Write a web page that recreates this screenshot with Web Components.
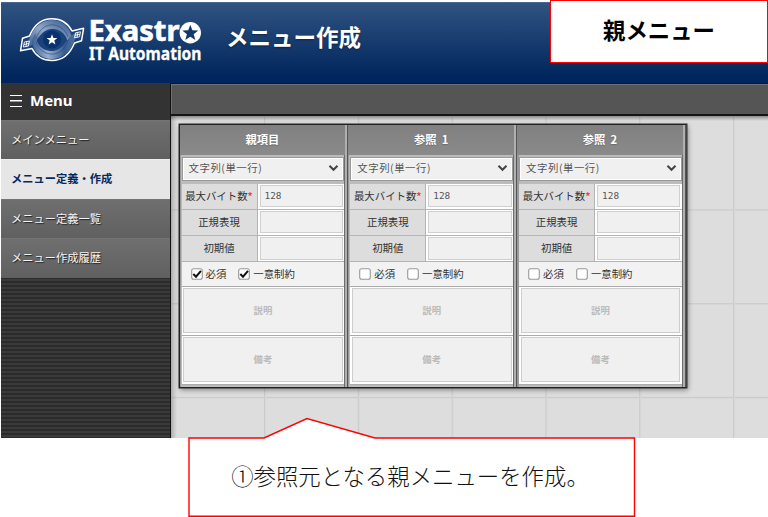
<!DOCTYPE html>
<html lang="ja">
<head>
<meta charset="utf-8">
<title>メニュー作成</title>
<style>
html,body{margin:0;height:100%;background:#fff;overflow:hidden}
body{font-family:"Noto Sans","Noto Sans CJK JP",sans-serif}
</style>
</head>
<body>
<ex-page></ex-page>
<script>
const define = (name, html) => customElements.define(name, class extends HTMLElement {
  constructor() {
    super();
    this.attachShadow({ mode: 'open' }).innerHTML = html;
  }
});

define('ex-logo', `
<style>:host{display:block;width:184px;height:50px}svg{display:block;overflow:visible}</style>
<svg width="184" height="50" viewBox="18 15 184 50">
  <defs>
    <linearGradient id="a" x1="0" y1="1" x2="1" y2="0"><stop offset="0" stop-color="#2c5188"/><stop offset=".5" stop-color="#93a8c7"/><stop offset="1" stop-color="#2a5087"/></linearGradient>
    <linearGradient id="b" x1="0" y1="0" x2="1" y2="0"><stop offset="0" stop-color="#3d6194"/><stop offset=".35" stop-color="#9bafcb"/><stop offset=".7" stop-color="#375c92"/><stop offset="1" stop-color="#54749f"/></linearGradient>
  </defs>
  <path d="M20.500 50.800 22.500 38.300 29.500 36C34 25 42 18.700 52 18.700c9.500 0 16 4.300 20 12.300L83.600 28.300 81.500 40.800 74.500 43C70 54 62 60.500 52 60.500c-9.500 0-16-4.300-20-12z" fill="#1b427a" stroke="#fff" stroke-width="1.500" stroke-linejoin="round"/>
  <path d="M30 37C34 27 42 20 52 20c11 0 18 7 20 18 .5 5-1 8-4 11 1-10-4-19-14-20-12-1-15 10-22 16l-6 3z" fill="url(#a)"/>
  <path d="M74 42C70 52 62 59 52 59c-11 0-18-7-20-16 0-4 1-7 4-10-1 10 5 17 14 18 12 1 15-10 22-16l6-3z" fill="url(#b)"/>
  <path d="M36 39c3-10 10-15 18-14 7 1 12 6 14 12M68 40c-3 10-10 15-18 14-7-1-12-6-14-12" fill="none" stroke="#1b427a" stroke-width="1" opacity=".55"/>
  <circle cx="52" cy="39.500" r="9" fill="#0a326b"/>
  <path d="m52 34.300 1.400 3.700 4 .1-3.100 2.500 1.100 3.800-3.400-2.200-3.400 2.200 1.100-3.800-3.100-2.500 4-.1z" fill="#fff"/>
  <path d="M24.400 42l5-1-1 5-5 1zM26.900 41.500l-1 5M23.900 44.500l5-1M75.500 32.800l5-1-1 5-5 1zM78 32.300l-1 5M75 35.300l5-1" fill="none" stroke="#fff" stroke-width=".9"/>
  <text x="88.500" y="41" textLength="91" lengthAdjust="spacingAndGlyphs" font-family="Noto Sans,sans-serif" font-weight="700" font-size="28.500" fill="#fff" stroke="#fff" stroke-width=".6">Exastr</text>
  <circle cx="190.300" cy="32.700" r="10.700" fill="#fff"/>
  <path d="m190.300 24.800 2.100 5.500 5.900.3-4.600 3.700 1.600 5.700-5-3.300-5 3.300 1.600-5.700-4.600-3.700 5.900-.3z" fill="#12386e"/>
  <text x="89" y="59.500" textLength="112.500" lengthAdjust="spacingAndGlyphs" font-family="Noto Sans,sans-serif" font-weight="700" font-size="17.500" fill="#fff" stroke="#fff" stroke-width=".3">IT Automation</text>
</svg>`);

define('ex-header', `
<style>
:host{display:flex;box-sizing:border-box;height:81px;padding:12px 0 0 17px;background:linear-gradient(#305381,#00265d 92%);color:#fff;border-top:1px solid #46658f}
h1{margin:3px 0 0 24px;font:700 22.500px/36px "Noto Sans CJK JP",sans-serif;text-shadow:0 1px 2px #0006}
</style><ex-logo></ex-logo><h1><slot></slot></h1>`);

define('ex-menu-item', `
<style>
:host{display:flex;align-items:center;box-sizing:border-box;height:39.400px;padding:0 0 1px 10px;font:400 11.250px/1 "Noto Sans CJK JP",sans-serif;color:#f4f4f4;background:linear-gradient(#6f6f6f,#606060);border-top:1px solid #747474;text-shadow:1px 1px 1px #222}
:host([active]){background:#e6e6e6;border-color:#eee;color:#06295e;font-weight:700;text-shadow:none}
</style><slot></slot>`);

define('ex-sidebar', `
<style>
:host{display:block;background:repeating-linear-gradient(#3a3a3a 0 2px,#2b2b2b 2px 4px)}
header{display:flex;align-items:center;gap:8px;height:34px;padding:0 0 3px 9px;background:#333;color:#fff;font:700 15px/1 "Noto Sans",sans-serif}
i{box-sizing:border-box;width:12px;height:12px;border:solid #fff;border-width:1.500px 0;background:linear-gradient(#fff,#fff) 0 50%/100% 1.500px no-repeat;margin-top:2px}
</style><header><i></i>Menu</header><slot></slot>`);

define('ex-field', `
<style>
:host{display:grid;grid-template-columns:76px 1fr;height:25.200px;border-bottom:1px solid #b4b4b4;font:400 10.400px/1 "Noto Sans CJK JP",sans-serif;color:#333;background:#fff}
.l{display:flex;align-items:center;justify-content:center;background:#ddd;border-right:1px solid #b4b4b4;white-space:nowrap}
.v{display:flex;align-items:center;margin:1.500px 1.500px 1.500px 2px;padding-left:4px;background:#f0f0f0;border:1.500px solid #cfcfcf;font:400 9.400px/1 "DejaVu Sans Mono",monospace;color:#555}
</style><div class="l"><slot></slot><slot name="mark"></slot></div><div class="v"><slot name="value"></slot></div>`);

define('ex-check', `
<style>
:host{display:flex;align-items:center;gap:3px;white-space:nowrap}
svg{display:block}path{display:none}:host([checked]) path{display:block}
</style><svg width="12" height="12"><rect x=".7" y=".7" width="10.600" height="10.600" rx="2" fill="#fff" stroke="#999" stroke-width="1.100"/><path d="M2.300 6 5 8.700 10 2.900" fill="none" stroke="#111" stroke-width="2"/></svg><slot></slot>`);

define('ex-column', `
<style>
:host{display:block;box-sizing:border-box;width:168.800px;height:262px;padding:0 4px 0 2px;background:linear-gradient(90deg,#999 0 1.500px,#bbb 1.500px 2px,#bbb 2px calc(100% - 4px),#6c6c6c calc(100% - 4px) calc(100% - 3px),#b0b0b0 calc(100% - 3px) calc(100% - 1px),#555 calc(100% - 1px));font:400 10.400px/1 "Noto Sans CJK JP",sans-serif;color:#333}
header{display:flex;align-items:center;justify-content:center;height:30px;margin:0 -1px 0 -2px;background:linear-gradient(#808080,#8a8a8a);color:#fff;font-weight:700;font-size:11.250px;white-space:pre;text-shadow:0 1px 1px #5558}
.sel{display:flex;align-items:center;justify-content:space-between;box-sizing:border-box;height:23.500px;margin:2px 0 3px;padding:0 4px 1px 6px;background:#f0f0f0;border:1px solid #999;box-shadow:inset 0 0 0 1px #fff;color:#555;letter-spacing:.55px}
.checks{display:flex;align-items:center;gap:12px;height:23.500px;padding-left:9px;background:#f2f2f2;border-bottom:1px solid #aaa}
.memo{height:49px;box-sizing:border-box;padding:1.500px;background:#fff;border-bottom:1px solid #aaa}
.memo div{display:flex;align-items:center;justify-content:center;height:100%;box-sizing:border-box;background:#f0f0f0;border:1.500px solid #cdcdcd;color:#bbb;font-weight:700;font-size:9.400px}
[slot=mark]{color:#e44;font-weight:700}
</style>
<header><slot></slot></header>
<div class="sel">文字列(単一行)<svg width="11" height="8"><path d="M1.500 1.700 5.500 5.800 9.500 1.700" fill="none" stroke="#444" stroke-width="2"/></svg></div>
<ex-field>最大バイト数<span slot="mark">*</span><span slot="value">128</span></ex-field>
<ex-field>正規表現</ex-field>
<ex-field>初期値</ex-field>
<div class="checks"><ex-check>必須</ex-check><ex-check>一意制約</ex-check></div>
<div class="memo"><div>説明</div></div><div class="memo"><div>備考</div></div>`);

define('ex-workspace', `
<style>
:host{display:grid;grid-template-rows:33px 1fr;min-width:0;border-left:1.500px solid #111}
.bar{box-sizing:border-box;background:#555;border:solid #151515;border-width:1px 0 2px;box-shadow:inset 1px 1px #707070}
.canvas{box-sizing:border-box;padding:8px 0 0 7.500px;background-color:#ddd;background-image:linear-gradient(#0005,#0000 5px),linear-gradient(90deg,#0003,#0000 6px),linear-gradient(90deg,#cbcbcb 1px,#d8d8d8 1px 2px,#0000 2px),linear-gradient(#cbcbcb 1px,#d8d8d8 1px 2px,#0000 2px);background-size:100% 5px,6px 100%,93.800px 100%,100% 93.800px;background-position:0 0,0 0,93px 0,0 -0.500px;background-repeat:no-repeat,no-repeat,repeat-x,repeat-y}
.table{display:flex;width:506.500px;height:262px;border:1px solid #222;border-right-color:#444;box-shadow:0 0 0 .5px #333,1px 2px 5px #0006}
</style><div class="bar"></div><div class="canvas"><div class="table"><slot></slot></div></div>`);

define('ex-callout', `
<style>
:host{position:absolute;display:flex;align-items:center;justify-content:center;box-sizing:border-box;color:#111;font:400 22.400px/1 "Noto Sans CJK JP",sans-serif;white-space:nowrap}
:host([kind=label]){left:550px;top:0;width:218px;height:62.500px;padding-bottom:5px;background:#fff;border:1.500px solid #f00;font-weight:700;color:#000}
:host([kind=note]){left:188px;top:417px;width:448px;height:100px;padding:16px 4px 0 0;font-weight:300}
svg{position:absolute;left:0;top:0;display:none}:host([kind=note]) svg{display:block}
span{position:relative}
</style><svg width="448" height="100"><path d="M1 21H76L119 1.500 187 21H446.500V99.300H1z" fill="#fff" stroke="#f00" stroke-width="1.400"/></svg><span><slot></slot></span>`);

define('ex-page', `
<style>
:host{display:block;position:relative;width:768px;height:517px;overflow:hidden;background:#fff}
.app{display:grid;grid-template-rows:81px 1fr;box-sizing:border-box;width:766.500px;height:436px;margin:2px 0 0 1px}
.body{display:grid;grid-template-columns:169px 1fr;min-height:0}
</style>
<div class="app"><ex-header>メニュー作成</ex-header>
<div class="body">
<ex-sidebar><ex-menu-item>メインメニュー</ex-menu-item><ex-menu-item active>メニュー定義・作成</ex-menu-item><ex-menu-item>メニュー定義一覧</ex-menu-item><ex-menu-item>メニュー作成履歴</ex-menu-item></ex-sidebar>
<ex-workspace><ex-column id="first">親項目</ex-column><ex-column>参照  1</ex-column><ex-column>参照  2</ex-column></ex-workspace>
</div></div>
<ex-callout kind="label">親メニュー</ex-callout>
<ex-callout kind="note">①参照元となる親メニューを作成。</ex-callout>`);

const first = document.querySelector('ex-page').shadowRoot.getElementById('first');
first.shadowRoot.querySelectorAll('ex-check').forEach(c => c.setAttribute('checked', ''));
</script>
</body>
</html>
